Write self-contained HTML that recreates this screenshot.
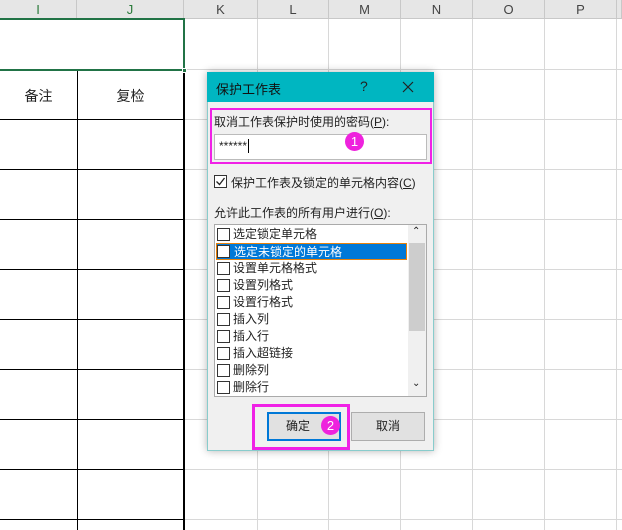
<!DOCTYPE html><html><head><meta charset="utf-8"><style>
*{margin:0;padding:0;box-sizing:border-box}
body{width:622px;height:530px;overflow:hidden;background:#fff;position:relative;font-family:"Liberation Sans","Noto Sans CJK SC",sans-serif;font-size:12px;color:#222}
.a{position:absolute}
.hd{top:0;height:19px;background:#e6e6e6;border-right:1px solid #c8c8c8;border-bottom:1px solid #c8c8c8;text-align:center;line-height:19px;font-size:13px;color:#444}
.vl{width:1px;background:#d8d8d8}
.hl{height:1px;background:#d8d8d8}
.cb{width:13px;height:13px;border:1px solid #333;background:#fff}
.it{left:1px;height:17px;line-height:17px;padding-left:17px;font-size:12px;width:190px}
.it .cb{position:absolute;left:1px;top:2px}
</style></head><body>
<div class="a hd" style="left:0;width:77px;color:#2a7a3a">I</div>
<div class="a hd" style="left:77px;width:107px;color:#2a7a3a">J</div>
<div class="a hd" style="left:184px;width:74px">K</div>
<div class="a hd" style="left:258px;width:71px">L</div>
<div class="a hd" style="left:329px;width:72px">M</div>
<div class="a hd" style="left:401px;width:72px">N</div>
<div class="a hd" style="left:473px;width:72px">O</div>
<div class="a hd" style="left:545px;width:72px">P</div>
<div class="a hd" style="left:617px;width:5px"></div>
<div class="a vl" style="left:257px;top:19px;height:511px"></div>
<div class="a vl" style="left:328px;top:19px;height:511px"></div>
<div class="a vl" style="left:400px;top:19px;height:511px"></div>
<div class="a vl" style="left:472px;top:19px;height:511px"></div>
<div class="a vl" style="left:544px;top:19px;height:511px"></div>
<div class="a vl" style="left:616px;top:19px;height:511px"></div>
<div class="a hl" style="left:184px;width:438px;top:69px"></div>
<div class="a hl" style="left:184px;width:438px;top:119px"></div>
<div class="a hl" style="left:184px;width:438px;top:169px"></div>
<div class="a hl" style="left:184px;width:438px;top:219px"></div>
<div class="a hl" style="left:184px;width:438px;top:269px"></div>
<div class="a hl" style="left:184px;width:438px;top:319px"></div>
<div class="a hl" style="left:184px;width:438px;top:369px"></div>
<div class="a hl" style="left:184px;width:438px;top:419px"></div>
<div class="a hl" style="left:184px;width:438px;top:469px"></div>
<div class="a hl" style="left:184px;width:438px;top:519px"></div>
<div class="a" style="left:77px;top:70px;width:1px;height:460px;background:#000"></div>
<div class="a" style="left:183px;top:70px;width:2px;height:460px;background:#000"></div>
<div class="a" style="left:0;top:119px;width:184px;height:1px;background:#000"></div>
<div class="a" style="left:0;top:169px;width:184px;height:1px;background:#000"></div>
<div class="a" style="left:0;top:219px;width:184px;height:1px;background:#000"></div>
<div class="a" style="left:0;top:269px;width:184px;height:1px;background:#000"></div>
<div class="a" style="left:0;top:319px;width:184px;height:1px;background:#000"></div>
<div class="a" style="left:0;top:369px;width:184px;height:1px;background:#000"></div>
<div class="a" style="left:0;top:419px;width:184px;height:1px;background:#000"></div>
<div class="a" style="left:0;top:469px;width:184px;height:1px;background:#000"></div>
<div class="a" style="left:0;top:519px;width:184px;height:1px;background:#000"></div>
<div class="a" style="left:0;top:86px;width:77px;text-align:center;font-size:14px">备注</div>
<div class="a" style="left:77px;top:86px;width:107px;text-align:center;font-size:14px">复检</div>
<div class="a" style="left:-2px;top:18px;width:187px;height:53px;border:2px solid #217346"></div>
<div class="a" style="left:182px;top:68px;width:5px;height:5px;background:#217346;border:1px solid #fff"></div>
<div class="a" style="left:207px;top:72px;width:227px;height:379px;background:#f0f0f0;border:1px solid #8cc;box-shadow:0 0 8px rgba(0,0,0,.3)"></div>
<div class="a" style="left:207px;top:72px;width:227px;height:30px;background:#00b6c1"></div>
<div class="a" style="left:216px;top:79px;font-size:13px;color:#111">保护工作表</div>
<div class="a" style="left:360px;top:78px;font-size:14px">?</div>
<svg class="a" style="left:402px;top:81px" width="12" height="12"><path d="M1 1L11 11M11 1L1 11" stroke="#222" stroke-width="1.2"/></svg>
<div class="a" style="left:210px;top:108px;width:222px;height:56px;border:2px solid #f021e6"></div>
<div class="a" style="left:214px;top:113px">取消工作表保护时使用的密码(<u>P</u>):</div>
<div class="a" style="left:214px;top:134px;width:213px;height:26px;background:#fff;border:1px solid #bbb"></div>
<div class="a" style="left:219px;top:139px;font-size:12px">******<span style="border-left:1px solid #000;margin-left:1px"></span></div>
<div class="a" style="left:345px;top:132px;width:19px;height:19px;border-radius:50%;background:#ee22dd;color:#fff;text-align:center;line-height:19px;font-size:13px">1</div>
<div class="a cb" style="left:214px;top:175px"></div>
<svg class="a" style="left:215px;top:176px" width="11" height="11"><path d="M1.5 5.5L4.5 8.5L9.5 2" stroke="#222" stroke-width="1.3" fill="none"/></svg>
<div class="a" style="left:231px;top:174px">保护工作表及锁定的单元格内容(<u>C</u>)</div>
<div class="a" style="left:214px;top:204px">允许此工作表的所有用户进行(<u>O</u>):</div>
<div class="a" style="left:214px;top:224px;width:213px;height:173px;background:#fff;border:1px solid #aaa">
<div class="a" style="left:193px;top:0;width:18px;height:171px;background:#f0f0f0"></div>
<div class="a" style="left:194px;top:18px;width:16px;height:88px;background:#cdcdcd"></div>
<div class="a" style="left:197px;top:1px;font-size:10px">⌃</div>
<div class="a" style="left:197px;top:153px;font-size:10px">⌄</div>
<div class="a it" style="top:1px"><span class="cb"></span>选定锁定单元格</div>
<div class="a it" style="top:18px;background:#0078d7;color:#fff;border:1px solid #e8820c;width:191px"><span class="cb" style="left:0;top:1px"></span>选定未锁定的单元格</div>
<div class="a it" style="top:35px"><span class="cb"></span>设置单元格格式</div>
<div class="a it" style="top:52px"><span class="cb"></span>设置列格式</div>
<div class="a it" style="top:69px"><span class="cb"></span>设置行格式</div>
<div class="a it" style="top:86px"><span class="cb"></span>插入列</div>
<div class="a it" style="top:103px"><span class="cb"></span>插入行</div>
<div class="a it" style="top:120px"><span class="cb"></span>插入超链接</div>
<div class="a it" style="top:137px"><span class="cb"></span>删除列</div>
<div class="a it" style="top:154px"><span class="cb"></span>删除行</div>
</div>
<div class="a" style="left:252px;top:404px;width:98px;height:46px;border:3px solid #f021e6"></div>
<div class="a" style="left:267px;top:412px;width:74px;height:29px;background:#e1e1e1;border:2px solid #0078d7;text-align:center;line-height:25px;padding-right:12px">确定</div>
<div class="a" style="left:321px;top:416px;width:19px;height:19px;border-radius:50%;background:#ee22dd;color:#fff;text-align:center;line-height:19px;font-size:13px">2</div>
<div class="a" style="left:351px;top:412px;width:74px;height:29px;background:#e1e1e1;border:1px solid #adadad;text-align:center;line-height:27px">取消</div>
</body></html>
